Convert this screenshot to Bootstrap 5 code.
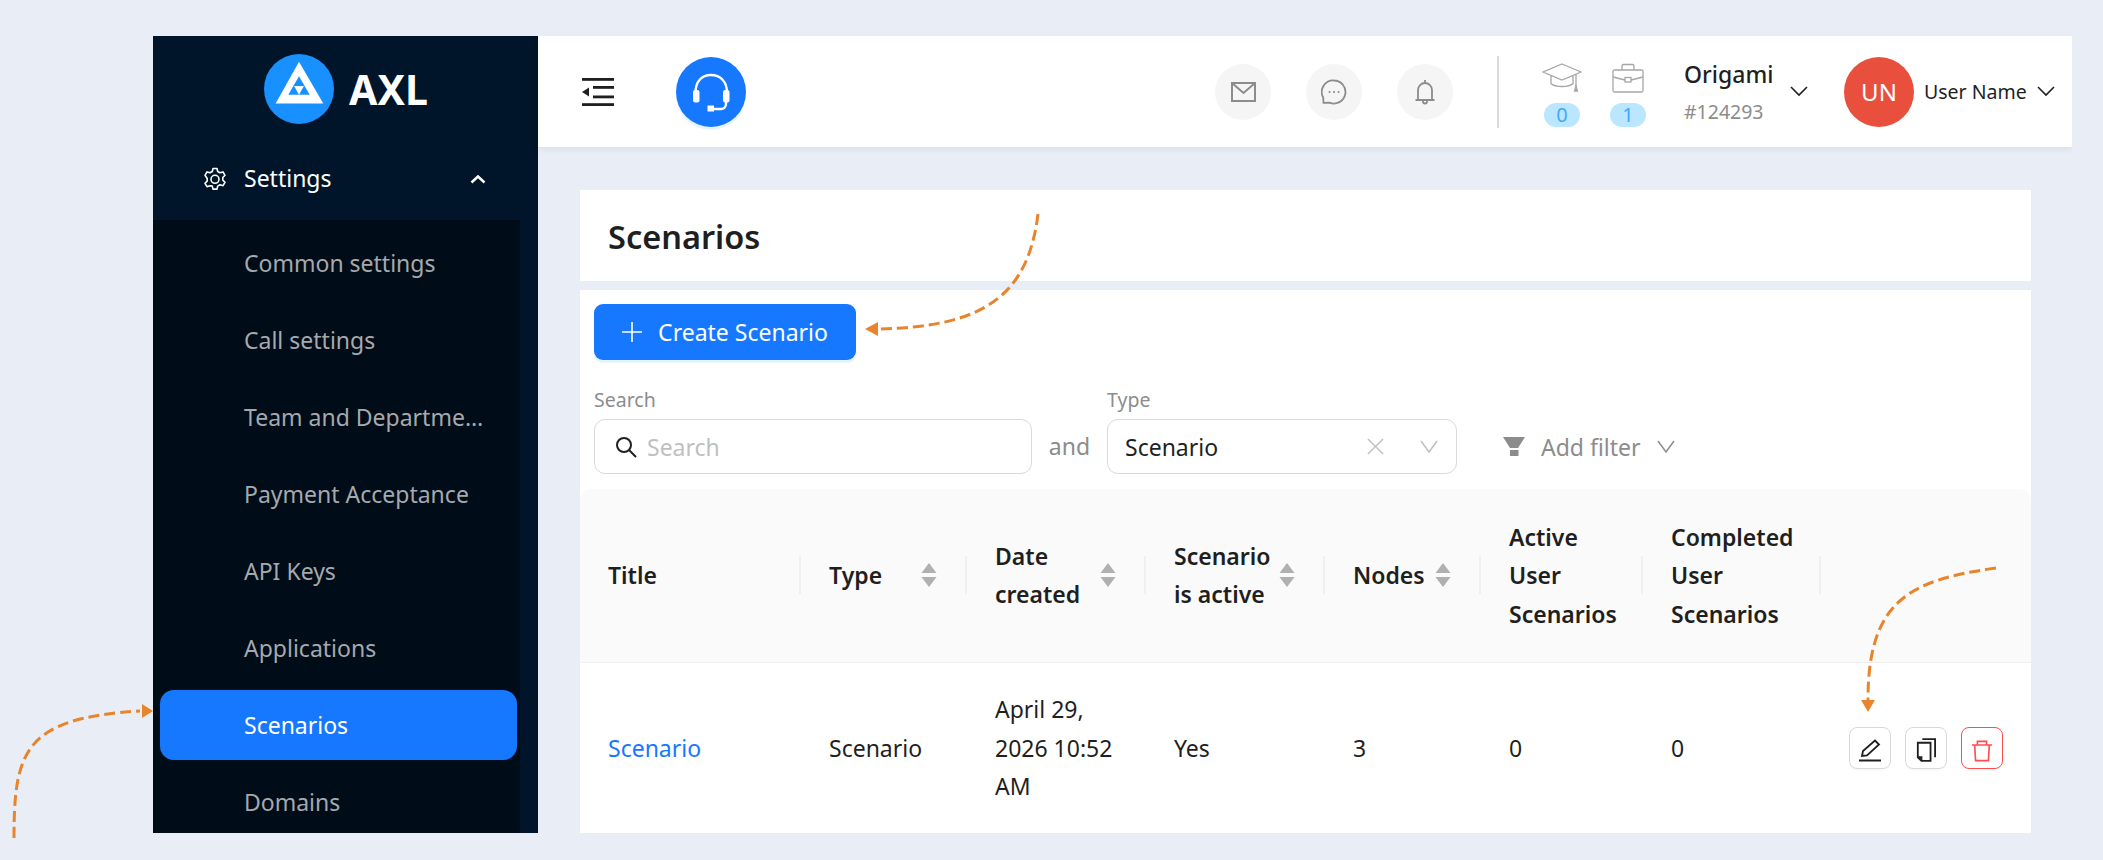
<!DOCTYPE html>
<html lang="en">
<head>
    <meta charset="UTF-8" />
    <title>Scenarios</title>
    <link href="https://cdn.jsdelivr.net/npm/bootstrap@5.3.0/dist/css/bootstrap.min.css" rel="stylesheet"/>
    <style>
        html, body { height: 860px; overflow: hidden; }
        body { background: #e9eef6; font-family: "Noto Sans", "Liberation Sans", sans-serif; font-size: 23px; color: #1f1f1f; position: relative; }
        #app-shell { position: absolute; left: 153px; top: 36px; width: 1919px; height: 797px; overflow: hidden; }

        #side { width: 385px; background: #001529; }
        .logo-row { height: 101px; padding-top: 18px; }
        .logo-txt { font-size: 41px; font-weight: 700; color: #fff; line-height: 1; }
        .side-head { height: 83px; padding: 0 52px 0 50px; color: #fff; }
        .side-label { margin-left: 17px; }
        .side-sub { width: 367px; background: #000c17; padding-top: 8px; height: 620px; }
        .side-item { height: 70px; margin: 0 3px 7px 7px; padding-left: 84px; padding-right: 25px; line-height: 70px; color: #a5a9ad; border-radius: 14px; }
        .side-item.on { background: #1677ff; color: #fff; }

        #top-bar { height: 111px; background: #fff; box-shadow: 0 2px 6px rgba(0,21,41,.08); padding-left: 44px; }
        .round-blue { width: 70px; height: 70px; border-radius: 50%; background: #1677ff; box-shadow: 0 3px 0 #e6f4ff; margin-left: 62px; }
        .round-grey { width: 56px; height: 56px; border-radius: 50%; background: #f5f5f5; }
        .round-gaps { gap: 35px; }
        .top-sep { width: 2px; height: 72px; background: #d9d9d9; margin: 0 45px 0 44px; }
        .count-box { width: 36px; margin-top: 6px; }
        .count-box + .count-box { margin-left: 30px; }
        .count-pill { display: block; width: 36px; height: 24px; line-height: 24px; border-radius: 12px; background: #bae7ff; color: #40a9ff; font-size: 20px; text-align: center; margin-top: 10px; }
        .org-box { width: 106px; margin-left: 38px; }
        .org-name { font-size: 23px; font-weight: 500; line-height: 30px; }
        .org-num { font-size: 19.500px; color: #8c8c8c; line-height: 26px; margin-top: 10px; }
        .ava { width: 70px; height: 70px; border-radius: 50%; background: #e94f3d; color: #fff; font-size: 24px; line-height: 70px; text-align: center; margin-left: 36px; }
        .user-name { font-size: 19.500px; width: 113px; margin-left: 10px; }
        .user-chev { margin-right: 17px; }

        #content { padding: 43px 41px 0 42px; }
        .head-box { height: 91px; background: #fff; padding: 2px 0 0 28px; margin-bottom: 9px; }
        .head-box h1 { font-size: 32.500px; font-weight: 600; margin: 0; }
        .body-box { background: #fff; padding-top: 14px; height: 600px; }
        .add-btn { width: 262px; height: 56px; margin-left: 14px; background: #1677ff; color: #fff; border: 0; border-radius: 9px; font-size: 23px; box-shadow: 0 3px 0 #e6f4ff; }
        .add-txt { margin-top: 1px; }
        .filter-row { padding: 28px 14px 0 14px; }
        .filter-lbl { font-size: 19.500px; color: #8c8c8c; line-height: 24px; margin-bottom: 7px; }
        .fake-input { height: 55px; border: 1px solid #d9d9d9; border-radius: 11px; padding: 0 18px 0 17px; }
        .search-input { padding-left: 20px; gap: 10px; }
        .ph-txt { color: #bfbfbf; }
        .and-txt { color: #8c8c8c; width: 75px; text-align: center; line-height: 55px; }
        .type-clear { margin-right: 36px; }
        .add-filter { color: #8c8c8c; margin-left: 46px; height: 55px; }
        .fake-input span, .add-filter span { margin-top: 2px; }

        table.scen-table { table-layout: fixed; width: 1451px; margin: 15px 0 0 0; }
        .scen-table th, .scen-table td { padding: 0 28px; vertical-align: middle; line-height: 38.500px; border: 0; }
        .scen-table th { height: 173px; background: #fafafa; font-weight: 600; border-bottom: 1px solid #f0f0f0; position: relative; }
        .scen-table thead th:first-child { border-top-left-radius: 11px; }
        .scen-table thead th:last-child { border-top-right-radius: 11px; }
        .scen-table th:not(:last-child)::before { content: ""; position: absolute; right: 0; top: 67px; width: 2px; height: 38px; background: #f0f0f0; }
        .scen-table td { height: 171px; color: #1f1f1f; }
        .scen-table td.act-cell { padding: 0 0 0 28px; }
        .w-title { width: 221px; } .w-type { width: 166px; } .w-date { width: 179px; } .w-active { width: 179px; }
        .w-nodes { width: 156px; } .w-users { width: 162px; } .w-done { width: 178px; } .w-acts { width: 210px; }
        .sort-head { display: flex; align-items: center; justify-content: space-between; padding-right: 2px; }
        .sort-marks { flex: none; width: 16px; height: 24px; display: block; }
        .scen-link { color: #1677ff; text-decoration: none; }
        .act-row { gap: 14px; }
        .act-btn { width: 42px; height: 42px; padding: 0; border: 1px solid #d9d9d9; border-radius: 8px; background: #fff; box-shadow: 0 2px 0 rgba(0,0,0,.02); }
        .act-btn.del { border-color: #ff4d4f; }

        #arrows { position: absolute; left: 0; top: 0; width: 2103px; height: 860px; pointer-events: none; }
    </style>
</head>
<body>
<div id="app-shell" class="d-flex">
    <aside id="side" class="flex-shrink-0">
        <div class="logo-row d-flex justify-content-center align-items-start">
            <div class="d-flex align-items-center" style="gap:14px">
                <svg width="72" height="70" viewBox="0 0 72 72">
                    <circle cx="36" cy="36" r="36" fill="#1890ff"/>
                    <path fill="#fff" fill-rule="evenodd" d="M36 8 61 51H12ZM36 23 25 42H47Z"/>
                    <path fill="#fff" d="M31 33H41L36 42Z"/>
                </svg>
                <span class="logo-txt">AXL</span>
            </div>
        </div>
        <div class="side-head d-flex align-items-center">
            <svg width="24" height="24" viewBox="0 0 24 24" fill="none" stroke="#fff" stroke-width="1.6" stroke-linejoin="round">
                <path d="M10 1.5h4l.7 3 2.3 1.3 3-.9 2 3.4-2.2 2.2v2.6l2.2 2.2-2 3.4-3-.9-2.3 1.3-.7 3h-4l-.7-3L7 18.8l-3 .9-2-3.4 2.2-2.2v-2.6L2 8.3l2-3.4 3 .9 2.3-1.3Z"/>
                <circle cx="12" cy="12.3" r="4"/>
            </svg>
            <span class="side-label flex-grow-1">Settings</span>
            <svg width="16" height="10" viewBox="0 0 16 10" fill="none" stroke="#fff" stroke-width="2.4"><path d="M1.5 8.5 8 2.500l6.500 6"/></svg>
        </div>
        <div class="side-sub">
            <div class="side-item text-truncate">Common settings</div>
            <div class="side-item text-truncate">Call settings</div>
            <div class="side-item text-truncate">Team and Departments</div>
            <div class="side-item text-truncate">Payment Acceptance</div>
            <div class="side-item text-truncate">API Keys</div>
            <div class="side-item text-truncate">Applications</div>
            <div class="side-item text-truncate on">Scenarios</div>
            <div class="side-item text-truncate">Domains</div>
        </div>
    </aside>

    <div class="flex-grow-1">
        <header id="top-bar" class="d-flex align-items-center">
            <svg width="32" height="28" viewBox="0 0 32 28" fill="#1f1f1f">
                <rect width="32" height="2.800"/>
                <rect x="11" y="8" width="21" height="2.800"/>
                <rect x="11" y="17.500" width="21" height="2.800"/>
                <rect y="25.200" width="32" height="2.800"/>
                <path d="M0 14 7 9.500v9Z"/>
            </svg>
            <div class="round-blue">
                <svg class="d-block" width="70" height="70" viewBox="0 0 70 70" fill="none" stroke="#fff" stroke-width="2.400">
                    <path d="M19.500 36C19.500 24 26 18 35 18s16 6 16 18"/>
                    <path d="M50 44v3a5 5 0 0 1-5 5h-8"/>
                    <rect x="17" y="33" width="6.500" height="12.500" rx="2" fill="#fff" stroke="none"/>
                    <rect x="47" y="33" width="6.500" height="12.500" rx="2" fill="#fff" stroke="none"/>
                    <rect x="31.500" y="48.500" width="6.500" height="6" fill="#fff" stroke="none"/>
                </svg>
            </div>
            <div class="d-flex align-items-center ms-auto">
                <div class="d-flex round-gaps align-items-center">
                    <div class="round-grey d-flex align-items-center justify-content-center">
                        <svg width="25" height="20" viewBox="0 0 25 20" fill="none" stroke="#8c8c8c" stroke-width="2"><rect x="1" y="1" width="23" height="18"/><path d="M1 1l11.500 10L24 1"/></svg>
                    </div>
                    <div class="round-grey d-flex align-items-center justify-content-center">
                        <svg width="26" height="26" viewBox="0 0 26 26" fill="none" stroke="#8c8c8c" stroke-width="1.800"><path d="M13 1.500a11.500 11.500 0 1 1-4.500 22.100L2.500 23.800l-.3-5.300A11.500 11.500 0 0 1 13 1.500Z"/><path d="M8.500 13h.1M13 13h.1M17.500 13h.1" stroke-width="2" stroke-linecap="round"/></svg>
                    </div>
                    <div class="round-grey d-flex align-items-center justify-content-center">
                        <svg width="20" height="26" viewBox="0 0 20 26" fill="none" stroke="#8c8c8c" stroke-width="1.800"><path d="M3 21V11a7 7 0 0 1 14 0v10M.5 21h19M10 1v3M8 21v1.500a2 2 0 0 0 4 0V21"/></svg>
                    </div>
                </div>
                <div class="top-sep"></div>
                <div class="count-box d-flex flex-column align-items-center">
                    <svg class="flex-shrink-0" width="40" height="30" viewBox="0 0 40 30" fill="none" stroke="#a6a6a6" stroke-width="1.300"><path d="M20 1 39 9 20 17 1 9ZM9 12.500v8c4 4 18 4 22 0v-8M34 11v13"/><path d="M34 23l-1.500 5h3Z" fill="#a6a6a6"/></svg>
                    <span class="count-pill">0</span>
                </div>
                <div class="count-box d-flex flex-column align-items-center">
                    <svg class="flex-shrink-0" width="34" height="30" viewBox="0 0 34 30" fill="none" stroke="#a6a6a6" stroke-width="1.300"><rect x="2" y="7" width="30" height="22" rx="1.500"/><path d="M11 7V3a1.500 1.500 0 0 1 1.500-1.500h9A1.500 1.500 0 0 1 23 3v4M2 14l12 3M32 14l-12 3"/><rect x="14" y="14.500" width="6" height="4.500"/></svg>
                    <span class="count-pill">1</span>
                </div>
                <div class="org-box">
                    <div class="org-name">Origami</div>
                    <div class="org-num">#124293</div>
                </div>
                <svg width="18" height="11" viewBox="0 0 18 11" fill="none" stroke="#1f1f1f" stroke-width="1.600"><path d="M1 1l8 8 8-8"/></svg>
                <div class="ava">UN</div>
                <span class="user-name">User Name</span>
                <svg class="user-chev" width="18" height="11" viewBox="0 0 18 11" fill="none" stroke="#1f1f1f" stroke-width="1.600"><path d="M1 1l8 8 8-8"/></svg>
            </div>
        </header>

        <main id="content">
            <div class="head-box d-flex align-items-center"><h1>Scenarios</h1></div>
            <div class="body-box">
                <button class="add-btn d-flex align-items-center justify-content-center gap-3">
                    <svg width="20" height="20" viewBox="0 0 20 20" stroke="#fff" stroke-width="1.600"><path d="M10 0v20M0 10h20"/></svg>
                    <span class="add-txt">Create Scenario</span>
                </button>
                <div class="filter-row d-flex align-items-end">
                    <div style="width:438px">
                        <div class="filter-lbl">Search</div>
                        <div class="fake-input search-input d-flex align-items-center">
                            <svg width="22" height="22" viewBox="0 0 22 22" fill="none" stroke="#1f1f1f" stroke-width="2"><circle cx="9" cy="9" r="7"/><path d="M14 14l7 7"/></svg>
                            <span class="ph-txt">Search</span>
                        </div>
                    </div>
                    <div class="and-txt">and</div>
                    <div style="width:350px">
                        <div class="filter-lbl">Type</div>
                        <div class="fake-input d-flex align-items-center">
                            <span class="flex-grow-1">Scenario</span>
                            <svg class="type-clear" width="17" height="17" viewBox="0 0 18 18" stroke="#bfbfbf" stroke-width="1.500"><path d="M1 1l16 16M17 1 1 17"/></svg>
                            <svg width="18" height="13" viewBox="0 0 18 13" fill="none" stroke="#bfbfbf" stroke-width="1.500"><path d="M1 1l8 11 8-11"/></svg>
                        </div>
                    </div>
                    <div class="add-filter d-flex align-items-center gap-3">
                        <svg width="22" height="19" viewBox="0 0 22 19" fill="#8c8c8c"><path d="M0 0h22l-7 11H7Z"/><path d="M7 13h8.500v6H7Z"/></svg>
                        <span>Add filter</span>
                        <svg width="18" height="13" viewBox="0 0 18 13" fill="none" stroke="#8c8c8c" stroke-width="1.500"><path d="M1 1l8 11 8-11"/></svg>
                    </div>
                </div>
                <table class="scen-table">
                    <thead>
                        <tr>
                            <th class="w-title">Title</th>
                            <th class="w-type"><div class="sort-head"><span>Type</span><svg class="sort-marks" viewBox="0 0 16 24" fill="#b0b0b0"><path d="M8 0l7.500 10H.5ZM8 24 .5 14h15Z"/></svg></div></th>
                            <th class="w-date"><div class="sort-head"><span>Date created</span><svg class="sort-marks" viewBox="0 0 16 24" fill="#b0b0b0"><path d="M8 0l7.500 10H.5ZM8 24 .5 14h15Z"/></svg></div></th>
                            <th class="w-active"><div class="sort-head"><span>Scenario is active</span><svg class="sort-marks" viewBox="0 0 16 24" fill="#b0b0b0"><path d="M8 0l7.500 10H.5ZM8 24 .5 14h15Z"/></svg></div></th>
                            <th class="w-nodes"><div class="sort-head"><span>Nodes</span><svg class="sort-marks" viewBox="0 0 16 24" fill="#b0b0b0"><path d="M8 0l7.500 10H.5ZM8 24 .5 14h15Z"/></svg></div></th>
                            <th class="w-users">Active User Scenarios</th>
                            <th class="w-done">Completed User Scenarios</th>
                            <th class="w-acts"></th>
                        </tr>
                    </thead>
                    <tbody>
                        <tr>
                            <td><a class="scen-link" href="#">Scenario</a></td>
                            <td>Scenario</td>
                            <td>April 29, 2026 10:52 AM</td>
                            <td>Yes</td>
                            <td>3</td>
                            <td>0</td>
                            <td>0</td>
                            <td class="act-cell">
                                <div class="d-flex act-row">
                                    <button class="act-btn"><svg width="24" height="24" viewBox="0 0 24 24" fill="none" stroke="#1f1f1f" stroke-width="1.800"><path d="M4 18 5 13 17 2.500l4 4L9 17.500Z"/><path d="M1 22.500h22" stroke-width="2"/></svg></button>
                                    <button class="act-btn"><svg width="20" height="24" viewBox="0 0 22 26" fill="none" stroke="#1f1f1f" stroke-width="2"><path d="M7 1h14v20M2 5h14v20H6l-4-4ZM2 21h4v4"/></svg></button>
                                    <button class="act-btn del"><svg width="22" height="23" viewBox="0 0 24 24" fill="none" stroke="#ff4d4f" stroke-width="1.800"><path d="M1 6h22M7 6V2h10v4M4 6l1 17h14l1-17"/></svg></button>
                                </div>
                            </td>
                        </tr>
                    </tbody>
                </table>
            </div>
        </main>
    </div>
</div>

<svg id="arrows" viewBox="0 0 2103 860" fill="none" stroke="#e8842c" stroke-width="3">
    <path stroke-dasharray="11 5" d="M1038 214C1028 295 985 327 878 329"/>
    <path fill="#e8842c" stroke="none" d="M865 329 878 322V336Z"/>
    <path stroke-dasharray="11 5" d="M1996 568C1910 580 1868 600 1868 700"/>
    <path fill="#e8842c" stroke="none" d="M1868 712 1861 700H1875Z"/>
    <path stroke-dasharray="11 5" d="M14 838C14 750 25 718 140 711"/>
    <path fill="#e8842c" stroke="none" d="M153 711 142 704V718Z"/>
</svg>
</body>
</html>
